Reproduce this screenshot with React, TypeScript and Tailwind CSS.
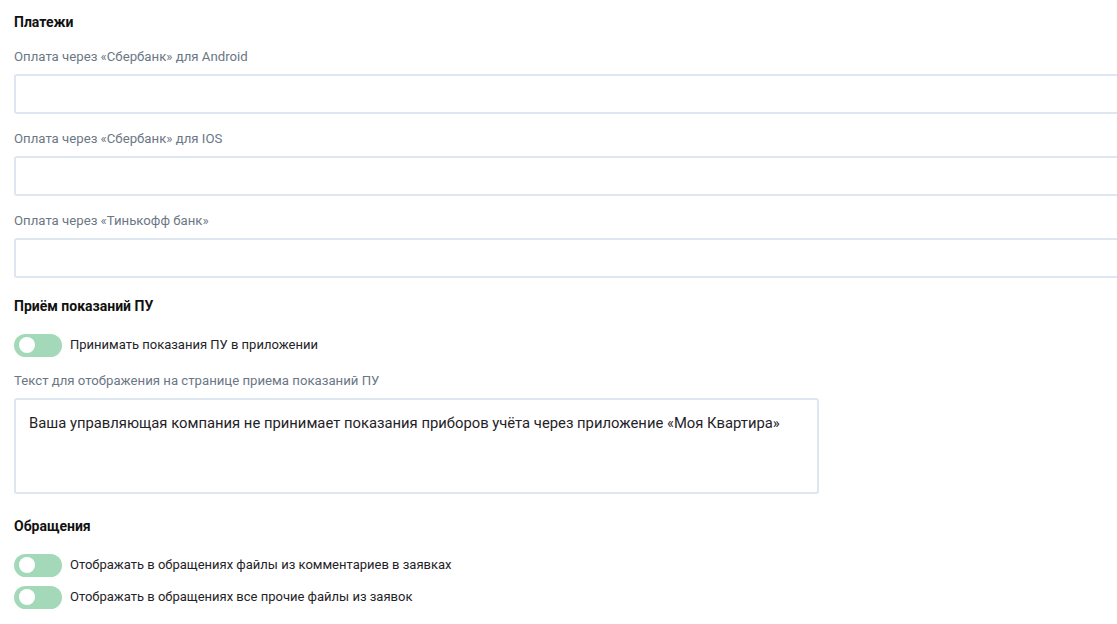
import React, { useState } from "react";

const font = { fontFamily: "Roboto, 'Noto Sans', sans-serif" };

function Toggle({ label }: { label: string }) {
  const [on, setOn] = useState(false);
  return (
    <label className="flex items-center gap-2 cursor-pointer h-[32px]">
      <button
        type="button"
        onClick={() => setOn(!on)}
        className="relative w-[48px] h-[23px] rounded-full bg-[#a3d9b9] shrink-0"
      >
        <span
          className={`absolute top-[3.5px] w-[16px] h-[16px] rounded-full bg-white ${
            on ? "left-[27px]" : "left-[5px]"
          }`}
        />
      </button>
      <span className="text-[13px] text-[#1f2328]">{label}</span>
    </label>
  );
}

function Field({ label }: { label: string }) {
  return (
    <div className="flex flex-col">
      <span className="text-[13.2px] text-[#6b7785] leading-[18px] mb-[8px]">{label}</span>
      <input
        type="text"
        className="h-[40px] w-[1200px] border-2 border-[#dde7f2] rounded-[3px] px-3 text-sm outline-none"
      />
    </div>
  );
}

export default function App() {
  return (
    <div className="bg-white min-h-screen pl-[14px] pt-[13px] overflow-hidden" style={font}>
      <h2 className="text-[14px] font-bold text-[#111] leading-[18px] mb-[17px]">Платежи</h2>
      <div className="flex flex-col gap-[16px]">
        <Field label="Оплата через «Сбербанк» для Android" />
        <Field label="Оплата через «Сбербанк» для IOS" />
        <Field label="Оплата через «Тинькофф банк»" />
      </div>

      <h2 className="text-[14px] font-bold text-[#111] leading-[18px] mt-[19px] mb-[14px]">
        Приём показаний ПУ
      </h2>
      <Toggle label="Принимать показания ПУ в приложении" />
      <div className="flex flex-col mt-[11px]">
        <span className="text-[13.2px] text-[#6b7785] leading-[18px] mb-[8px]">
          Текст для отображения на странице приема показаний ПУ
        </span>
        <textarea
          className="w-[805px] h-[96px] border-2 border-[#dde7f2] rounded-[3px] px-[13px] py-[12px] text-[14.8px] text-[#1f2328] outline-none resize-none"
          defaultValue="Ваша управляющая компания не принимает показания приборов учёта через приложение «Моя Квартира»"
        />
      </div>

      <h2 className="text-[14px] font-bold text-[#111] leading-[18px] mt-[23px] mb-[14px]">Обращения</h2>
      <Toggle label="Отображать в обращениях файлы из комментариев в заявках" />
      <Toggle label="Отображать в обращениях все прочие файлы из заявок" />
    </div>
  );
}
